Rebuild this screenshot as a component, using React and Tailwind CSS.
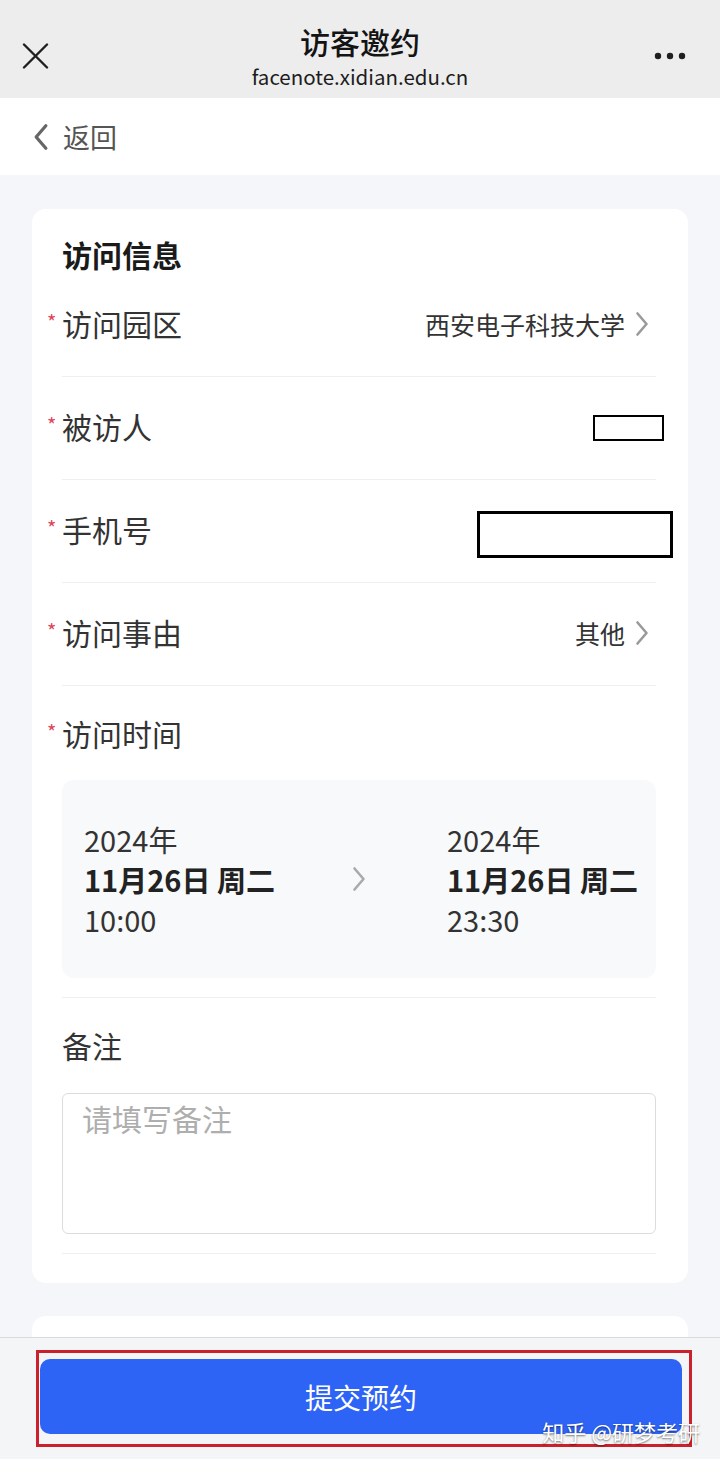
import React from 'react';

const FONT = "font-['Noto_Sans_CJK_SC','Noto_Sans',sans-serif]";

const Chevron = ({ className = '', color = '#9a9a9a', w = 14, h = 26, sw = 2.6 }) => (
    <svg width={w} height={h} viewBox="0 0 14 26" className={className} fill="none">
        <path d="M2.5 2.5 L11.5 13 L2.5 23.5" stroke={color} strokeWidth={sw} strokeLinecap="round" strokeLinejoin="round" />
    </svg>
);

const Label = ({ children, required = true }) => (
    <div className="flex items-center text-[30px] leading-[36px] text-[#333]">
        {required && <span className="-ml-[15px] w-[15px] text-[20px] leading-none text-[#e0445a] self-start mt-[7px]">*</span>}
        <span>{children}</span>
    </div>
);

const Row = ({ label, children }) => (
    <div className="h-[103px] flex items-center justify-between border-b border-[#efefef]">
        <div className="mb-[5px]">
            <Label>{label}</Label>
        </div>
        {children}
    </div>
);

const Value = ({ text }) => (
    <div className="flex items-center gap-[10px] pr-[7px] mb-[3px]">
        <span className="text-[25px] leading-[32px] text-[#333]">{text}</span>
        <Chevron />
    </div>
);

const DateCol = ({ year, day, time }) => (
    <div className="flex flex-col text-[29px] leading-[40px] text-[#333]">
        <span>{year}</span>
        <span className="font-bold text-[#222]">{day}</span>
        <span>{time}</span>
    </div>
);

export default function App() {
    return (
        <div className={`w-[720px] h-[1459px] flex flex-col bg-[#f5f6f9] overflow-hidden ${FONT}`}>
            {/* top bar */}
            <div className="h-[98px] shrink-0 bg-[#ededed] flex px-[22px]">
                <div className="w-[120px] pt-[43px]">
                    <svg width="27" height="26" viewBox="0 0 27 26" fill="none">
                        <path d="M2 1.5 L25 24.5 M25 1.5 L2 24.5" stroke="#1f1f1f" strokeWidth="2.4" strokeLinecap="round" />
                    </svg>
                </div>
                <div className="flex-1 flex flex-col items-center pt-[23px]">
                    <span className="text-[30px] leading-[36px] font-medium text-[#141414]">访客邀约</span>
                    <span className="mt-[5px] text-[20.5px] leading-[24px] text-[#1c1c1c]">facenote.xidian.edu.cn</span>
                </div>
                <div className="w-[120px] flex justify-end pt-[52px] pr-[12px]">
                    <svg width="32" height="8" viewBox="0 0 32 8">
                        <circle cx="4" cy="4" r="3.2" fill="#1f1f1f" />
                        <circle cx="16" cy="4" r="3.2" fill="#1f1f1f" />
                        <circle cx="28" cy="4" r="3.2" fill="#1f1f1f" />
                    </svg>
                </div>
            </div>

            {/* back bar */}
            <div className="h-[77px] shrink-0 bg-white flex items-center pl-[33px]">
                <Chevron className="rotate-180" color="#666" w={16} h={28} sw={3} />
                <span className="ml-[14px] text-[27px] leading-[34px] text-[#555]">返回</span>
            </div>

            {/* content */}
            <div className="flex-1 overflow-hidden px-[32px] pt-[34px]">
                <div className="bg-white rounded-[14px] px-[30px] pr-[32px] pb-[29px]">
                    <div className="pt-[27px] h-[65px] text-[30px] leading-[36px] font-bold text-[#1a1a1a]">访问信息</div>

                    <Row label="访问园区">
                        <Value text="西安电子科技大学" />
                    </Row>
                    <Row label="被访人">
                        <div className="w-[71px] h-[26px] border-2 border-black -mr-[8px]" />
                    </Row>
                    <Row label="手机号">
                        <div className="w-[196px] h-[47px] border-[3px] border-black -mr-[17px] mt-[6px]" />
                    </Row>
                    <Row label="访问事由">
                        <Value text="其他" />
                    </Row>

                    <div className="pt-[29px] pb-[19px] border-b border-[#efefef]">
                        <Label>访问时间</Label>
                        <div className="mt-[29px] h-[198px] bg-[#f8f9fb] rounded-[12px] flex items-center pl-[22px]">
                            <div className="w-[260px]">
                                <DateCol year="2024年" day="11月26日 周二" time="10:00" />
                            </div>
                            <div className="w-[103px] pl-[8px] flex items-center">
                                <Chevron color="#aaa" />
                            </div>
                            <DateCol year="2024年" day="11月26日 周二" time="23:30" />
                        </div>
                    </div>

                    <div className="pt-[29px] pb-[19px] border-b border-[#efefef]">
                        <Label required={false}>备注</Label>
                        <div className="mt-[30px] h-[141px] border border-[#dcdcdc] rounded-[6px] pl-[19px] pt-[6px] text-[30px] leading-[36px] text-[#aeaeae]">
                            请填写备注
                        </div>
                    </div>
                </div>

                <div className="mt-[33px] h-[200px] bg-white rounded-[14px]" />
            </div>

            {/* footer */}
            <div className="h-[122px] shrink-0 border-t border-[#dadada] bg-[#f4f5f7] pt-[12px] relative">
                <div className="ml-[36px] w-[656px] h-[97px] border-[3px] border-[#c9222d] pl-[1px] pt-[6px]">
                    <div className="w-[642px] h-[75px] rounded-[10px] bg-[#2e64f6] flex items-center justify-center text-[28px] text-white">
                        提交预约
                    </div>
                </div>
                <div className="absolute right-[20px] bottom-[14px] text-[22px] leading-[28px] text-white [text-shadow:0_1px_2px_rgba(0,0,0,0.55)]">
                    知乎 @研梦考研
                </div>
            </div>
        </div>
    );
}
